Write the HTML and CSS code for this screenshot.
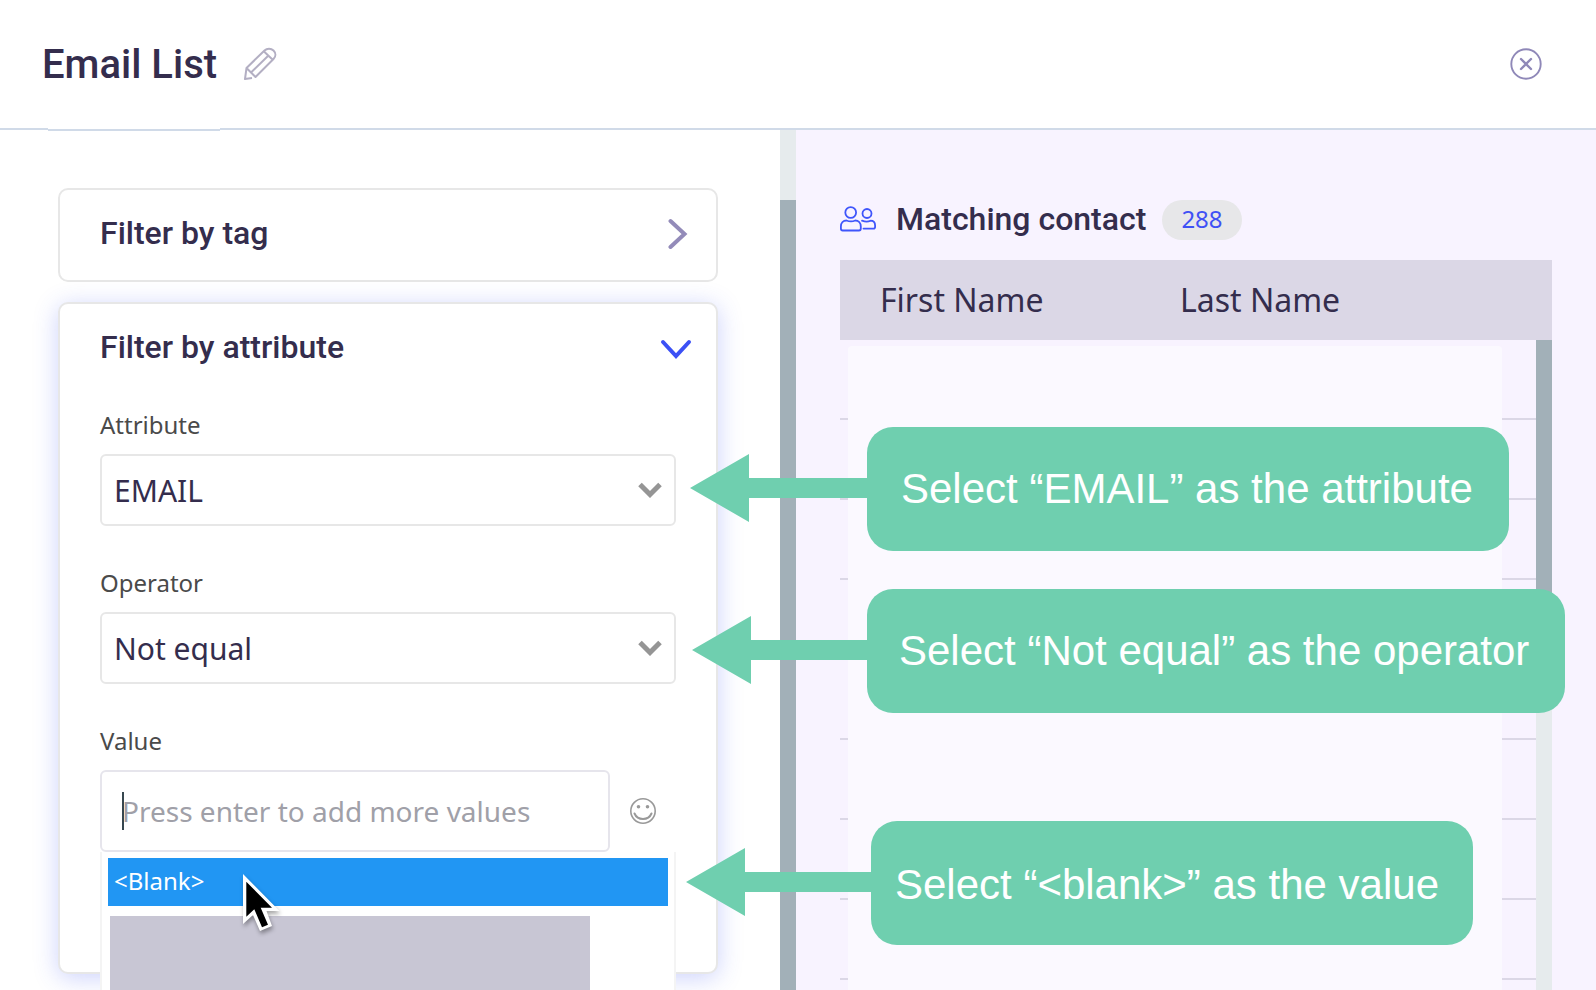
FILE: index.html
```html
<!DOCTYPE html>
<html lang="en">
<head>
<meta charset="utf-8">
<meta name="viewport" content="width=device-width, initial-scale=1">
<title>Email List</title>
<link rel="stylesheet" href="styles.css">
</head>
<body>
<div class="app">
  <header class="header">
    <h1 class="title">Email List</h1>
    <button class="icon-button" type="button" aria-label="Rename list">
      <svg width="34" height="34" viewBox="0 0 34 34" fill="none" stroke="#b3afc3" stroke-width="2" stroke-linejoin="round">
        <path d="M7 29.500 2 32 3.500 21.500 22 3.500C24.500 1 28 1 30.500 3.500S33 9.500 30.500 12L12.500 30Z" stroke="none"/>
        <path d="M9 31 2 32 3.500 21 21.500 3.500C24 1 28 1 30.500 3.500S33 9.500 30.500 12L12.500 30 3.500 21M8 25.500 26 8M21 4.500 30 13"/>
      </svg>
    </button>
    <button class="icon-button close" type="button" aria-label="Close">
      <svg width="32" height="32" viewBox="0 0 32 32" fill="none" stroke="#8f88b8" stroke-linecap="round">
        <circle cx="16" cy="16" r="14.700" stroke-width="1.900"/>
        <path d="M11 11 21 21M21 11 11 21" stroke-width="2.400"/>
      </svg>
    </button>
  </header>

  <main class="main">
    <section class="filters">
      <div class="filter-list">
        <button class="card card-closed" type="button">
          <span class="card-title">Filter by tag</span>
          <svg width="32" height="32" viewBox="0 0 32 32" fill="none" stroke="#938bb9" stroke-width="4" stroke-linecap="round"><path d="M8.500 4 22.500 17 8.500 30"/></svg>
        </button>

        <div class="card card-open">
          <button class="card-head" type="button" aria-expanded="true">
            <span class="card-title">Filter by attribute</span>
            <svg width="32" height="32" viewBox="0 0 32 32" fill="none" stroke="#3b50f5" stroke-width="4" stroke-linecap="round"><path d="M3 11 16 25 29 11"/></svg>
          </button>

          <div class="field">
            <label class="label" for="attribute">Attribute</label>
            <div class="select-wrap">
              <select id="attribute" class="control"><option>EMAIL</option></select>
              <svg class="caret" width="24" height="16" viewBox="0 0 24 16" fill="none" stroke="#959595" stroke-width="5"><path d="M2 2.500 12 12.500 22 2.500"/></svg>
            </div>
          </div>

          <div class="field">
            <label class="label" for="operator">Operator</label>
            <div class="select-wrap">
              <select id="operator" class="control"><option>Not equal</option></select>
              <svg class="caret" width="24" height="16" viewBox="0 0 24 16" fill="none" stroke="#959595" stroke-width="5"><path d="M2 2.500 12 12.500 22 2.500"/></svg>
            </div>
          </div>

          <div class="field">
            <label class="label" for="value">Value</label>
            <div class="value-row">
              <div class="value-wrap">
                <input id="value" class="control value-input" type="text" placeholder="Press enter to add more values">
                <span class="text-cursor"></span>
              </div>
              <button class="icon-button" type="button" aria-label="Insert emoji">
                <svg width="26" height="26" viewBox="0 0 26 26" fill="none" stroke="#999" stroke-width="1.600">
                  <circle cx="13" cy="13" r="12.200"/>
                  <path d="M4.500 15.500C6 19 9 21 13 21S20 19 21.500 15.500" stroke-width="2" stroke-linecap="round"/>
                  <circle cx="8.500" cy="8.700" r="1.800" fill="#999" stroke="none"/>
                  <circle cx="17.500" cy="8.700" r="1.800" fill="#999" stroke="none"/>
                </svg>
              </button>
              <div class="menu" role="listbox" aria-label="Value suggestions">
                <div class="option" role="option" aria-selected="true">&lt;Blank&gt;
                  <svg class="pointer" width="44" height="64" viewBox="0 0 44 64">
                    <path d="M3 2V52L13 43 20 59 32 54 26.500 39H39.500Z" fill="#fff"/>
                    <path d="M6.300 9.700V44.700L14.300 37.200 22 55.300 28 52.700 20.700 35.700H32Z" fill="#000"/>
                  </svg>
                </div>
                <div class="option-hidden"></div>
              </div>
            </div>
          </div>
        </div>
      </div>
      <div class="scrollbar"><div class="thumb thumb-low"></div></div>
    </section>

    <section class="matches">
      <div class="matches-head">
        <svg width="36" height="28" viewBox="0 0 36 28" fill="none" stroke="#3f55fb" stroke-width="1.800" stroke-linecap="round" stroke-linejoin="round">
          <circle cx="10.700" cy="6.500" r="5.400"/>
          <path d="M6.500 14.500C9.500 15.700 12.500 15.700 15.200 14.500 18.500 14.500 20.800 17 20.800 20.500V22.500Q20.800 24.500 19 24.500H2.700Q.9 24.500.9 22.500V20.500C.9 17 3.200 14.500 6.500 14.500Z"/>
          <circle cx="27" cy="7.500" r="4.500"/>
          <path d="M22 14.700C25.500 16 28 16 30.500 14.700 33.500 14.700 35.100 16.800 35.100 19.500V20.700Q35.100 22.600 33.500 22.600H23.500"/>
        </svg>
        <h2 class="matches-title">Matching contact</h2>
        <span class="badge">288</span>
      </div>
      <div class="table-wrap">
        <table class="contacts">
          <thead><tr><th class="first-col">First Name</th><th>Last Name</th></tr></thead>
          <tbody>
            <tr><td></td><td></td></tr>
            <tr><td></td><td></td></tr>
            <tr><td></td><td></td></tr>
            <tr><td></td><td></td></tr>
            <tr><td></td><td></td></tr>
            <tr><td></td><td></td></tr>
            <tr><td></td><td></td></tr>
            <tr><td></td><td></td></tr>
            <tr><td></td><td></td></tr>
          </tbody>
        </table>
        <div class="veil"></div>
        <div class="scrollbar table-scroll"><div class="thumb thumb-top"></div></div>
      </div>
    </section>
  </main>

  <div class="callout callout-attribute">
    <svg class="arrow" width="180" height="68" viewBox="0 0 180 68"><path d="M0 34 59 0V24H180V44H59V68Z" fill="#6fcfaf"/></svg>
    Select “EMAIL” as the attribute
  </div>
  <div class="callout callout-operator">
    <svg class="arrow" width="178" height="68" viewBox="0 0 178 68"><path d="M0 34 59 0V24H178V44H59V68Z" fill="#6fcfaf"/></svg>
    Select “Not equal” as the operator
  </div>
  <div class="callout callout-value">
    <svg class="arrow" width="188" height="68" viewBox="0 0 188 68"><path d="M0 34 59 0V24H188V44H59V68Z" fill="#6fcfaf"/></svg>
    Select “&lt;blank&gt;” as the value
  </div>
</div>
</body>
</html>
```
FILE: styles.css
```css
*, *::before, *::after { box-sizing: border-box; }

body {
  margin: 0;
  background: #fff;
  color: #342d4d;
  font-family: "Noto Sans", sans-serif;
}

button, input, select { font: inherit; color: inherit; }

svg { display: block; flex: none; }

.app {
  position: relative;
  display: flex;
  flex-direction: column;
  height: 100vh;
  overflow: hidden;
}

.header {
  position: relative;
  display: flex;
  align-items: center;
  gap: 26px;
  padding: 39px 54px 39px 42px;
  border-bottom: 2px solid #d0dae8;
}

.header::after {
  content: "";
  position: absolute;
  left: 48px;
  top: 100%;
  width: 172px;
  height: 3px;
  border-top: 1px solid #fff;
  background: #d0dae8;
}

.title {
  margin: 0;
  padding-top: 2px;
  font: 500 40px/48px Roboto, sans-serif;
}

.icon-button {
  padding: 0;
  border: 0;
  background: none;
}

.close { margin-left: auto; }

.main {
  flex: 1;
  min-height: 0;
  display: grid;
  grid-template-columns: 1fr 1fr;
  padding-right: 4px;
  background: #f8f3ff;
}

.filters {
  display: flex;
  min-height: 0;
  background: #fff;
}

.filter-list {
  flex: 1;
  min-height: 0;
  overflow: hidden;
  padding: 58px 62px 0 58px;
}

.scrollbar {
  width: 16px;
  overflow: hidden;
  background: #e6ebed;
}

.thumb { background: #a2b0b8; }

.thumb-low {
  height: 100%;
  margin-top: 70px;
}

.card {
  width: 100%;
  border: 2px solid #e7e7e7;
  border-radius: 10px;
  background: #fff;
}

.card-closed {
  display: flex;
  align-items: center;
  justify-content: space-between;
  height: 94px;
  padding: 0 22px 4px 40px;
}

.card-title { font: 500 32px/40px Roboto, sans-serif; }

.card-open {
  margin-top: 20px;
  padding: 23px 40px 120px;
  box-shadow: 0 4px 24px rgba(59, 80, 245, 0.26);
}

.card-head {
  display: flex;
  align-items: center;
  justify-content: space-between;
  width: calc(100% + 16px);
  padding: 0;
  border: 0;
  background: none;
}

.field { margin-top: 41px; }

.card-head + .field { margin-top: 42px; }

.label {
  display: block;
  margin-bottom: 13px;
  color: #4a4a4a;
  font-size: 24px;
  line-height: 32px;
}

.select-wrap { position: relative; }

.control {
  display: block;
  width: 100%;
  height: 72px;
  padding: 0 12px;
  appearance: none;
  border: 2px solid #e7e7e7;
  border-radius: 6px;
  outline: 0;
  background: #fff;
  font-size: 30px;
}

.caret {
  position: absolute;
  right: 14px;
  top: 28px;
}

.value-row {
  position: relative;
  display: flex;
  align-items: center;
  gap: 20px;
}

.value-wrap {
  position: relative;
  flex: 1;
}

.value-row .icon-button { margin-right: 20px; }

.value-input {
  height: 82px;
  padding: 0 20px;
  border-color: #e6e5ec;
  font-size: 28px;
}

.value-input::placeholder { color: #a0a0a8; opacity: 1; }

.text-cursor {
  position: absolute;
  left: 22px;
  top: 22px;
  width: 2px;
  height: 38px;
  background: #37474f;
}

.menu {
  position: absolute;
  left: 0;
  right: 0;
  top: 100%;
  height: 200px;
  padding: 6px;
  border: 2px solid #f4f4f4;
  border-width: 0 2px;
  background: #fff;
}

.option {
  position: relative;
  padding: 7px 6px 9px;
  background: #2196f3;
  color: #fff;
  font-size: 24px;
  line-height: 32px;
}

.pointer {
  position: absolute;
  left: 132px;
  top: 14px;
  filter: drop-shadow(1px 3px 2px rgba(0, 0, 0, 0.35));
}

.option-hidden {
  width: 480px;
  max-width: 90%;
  height: 160px;
  margin: 10px 0 0 2px;
  background: #c8c6d4;
}

.matches {
  display: flex;
  flex-direction: column;
  min-height: 0;
  padding: 70px 40px 0 44px;
}

.matches-head {
  display: flex;
  align-items: center;
  margin-bottom: 20px;
}

.matches-title {
  margin: 0 16px 0 20px;
  padding-bottom: 2px;
  font: 500 32px/38px Roboto, sans-serif;
}

.badge {
  padding: 0 19px 2px;
  border-radius: 20px;
  background: #e7e7e9;
  color: #3f51f5;
  font-size: 24px;
  line-height: 38px;
}

.table-wrap {
  position: relative;
  flex: 1;
  min-height: 0;
  overflow: hidden;
}

.contacts {
  width: 100%;
  border-collapse: separate;
  border-spacing: 0;
  table-layout: fixed;
}

.contacts th {
  height: 80px;
  padding: 0 40px 2px;
  background: #dbd7e6;
  font-size: 32px;
  font-weight: 400;
  text-align: left;
}

.contacts .first-col { width: 300px; }

.contacts td {
  height: 80px;
  padding: 0;
  border-bottom: 2px solid #dbd7e6;
}

.veil {
  position: absolute;
  left: 8px;
  right: 50px;
  top: 86px;
  bottom: 0;
  border-radius: 4px 4px 0 0;
  background: #fbf9ff;
}

.table-scroll {
  position: absolute;
  right: 0;
  top: 80px;
  bottom: 0;
}

.thumb-top { height: 300px; }

.callout {
  position: absolute;
  padding: 32px 36px 32px 34px;
  border-radius: 26px;
  background: #6fcfaf;
  color: #fff;
  font: 42px/60px "Liberation Sans", Arial, sans-serif;
  white-space: nowrap;
}

.callout-attribute { left: 867px; top: 427px; }

.callout-operator {
  left: 867px;
  top: 589px;
  padding-left: 32px;
}

.callout-value {
  left: 871px;
  top: 821px;
  padding: 34px 34px 30px 24px;
}

.arrow {
  position: absolute;
  right: calc(100% - 3px);
  top: 27px;
}
```
